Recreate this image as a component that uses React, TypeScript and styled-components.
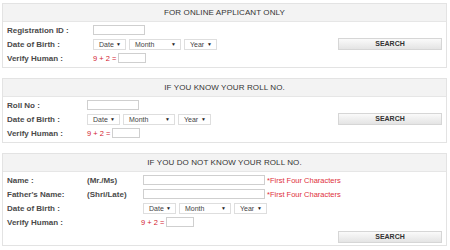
import React from "react";
import styled, { createGlobalStyle } from "styled-components";

const Global = createGlobalStyle`
	body {
		margin: 0;
		background: #ffffff;
		font-family: "Liberation Sans", Arial, sans-serif;
	}
`;

const Page = styled.div`
	display: flex;
	flex-direction: column;
	gap: 10px;
	width: 445px;
	padding: 3px 0 0 2px;
`;

const Panel = styled.section`
	border: 1px solid #e3e3e3;
	background: #ffffff;
`;

const Header = styled.div`
	height: 17px;
	line-height: 17px;
	background: #f3f3f3;
	border-bottom: 1px solid #e6e6e6;
	text-align: center;
	font-size: 8px;
	color: #333;
	letter-spacing: 0.1px;
`;

const Body = styled.div<{ $bottom?: boolean }>`
	display: flex;
	padding: 1px 4px 2px 4px;
	.aside {
		width: 104px;
		flex-shrink: 0;
		display: flex;
		align-items: ${(p) => (p.$bottom ? "flex-end" : "center")};
	}
`;

const Form = styled.div`
	flex: 1;
	min-width: 0;
	display: flex;
	flex-direction: column;
`;

const Row = styled.div`
	display: flex;
	align-items: center;
	height: 14px;
	white-space: nowrap;
`;

const Label = styled.span<{ $w: number }>`
	width: ${(p) => p.$w}px;
	flex-shrink: 0;
	font-size: 8px;
	font-weight: bold;
	color: #4a4a4a;
`;

const TextBox = styled.input<{ $w: number }>`
	width: ${(p) => p.$w}px;
	height: 10px;
	flex-shrink: 0;
	box-sizing: border-box;
	margin: 0;
	padding: 0;
	border: 1px solid #cfcfcf;
	background: #fff;
`;

const Selects = styled.div`
	display: flex;
	gap: 3px;
`;

const Select = styled.div<{ $w: number }>`
	width: ${(p) => p.$w}px;
	height: 11px;
	box-sizing: border-box;
	display: flex;
	align-items: center;
	justify-content: space-between;
	padding: 0 4px 0 5px;
	border: 1px solid #dedede;
	font-size: 7px;
	color: #444;
	span {
		font-size: 5px;
		color: #222;
	}
`;

const Captcha = styled.div`
	display: flex;
	align-items: center;
	gap: 2px;
	font-size: 7.5px;
	color: #d2202f;
`;

const Hint = styled.span`
	margin-left: 2px;
	flex-shrink: 0;
	font-size: 7.5px;
	color: #e0303c;
`;

const SearchButton = styled.button`
	width: 104px;
	height: 12px;
	margin: 0;
	padding: 0;
	border: 1px solid #d6d6d6;
	background: linear-gradient(#fafafa, #e4e4e4);
	font-family: "Liberation Sans", Arial, sans-serif;
	font-size: 7px;
	font-weight: bold;
	color: #333;
	line-height: 10px;
`;

const DateSelects = () => (
	<Selects>
		<Select $w={33}>
			Date <span>▼</span>
		</Select>
		<Select $w={52}>
			Month <span>▼</span>
		</Select>
		<Select $w={33}>
			Year <span>▼</span>
		</Select>
	</Selects>
);

const Verify = () => (
	<Captcha>
		9 + 2 =<TextBox $w={28} />
	</Captcha>
);

const App = () => {
	return (
		<>
			<Global />
			<Page>
				<Panel>
					<Header>FOR ONLINE APPLICANT ONLY</Header>
					<Body>
						<Form>
							<Row>
								<Label $w={86}>Registration ID :</Label>
								<TextBox $w={52} />
							</Row>
							<Row>
								<Label $w={86}>Date of Birth :</Label>
								<DateSelects />
							</Row>
							<Row>
								<Label $w={86}>Verify Human :</Label>
								<Verify />
							</Row>
						</Form>
						<div className='aside'>
							<SearchButton>SEARCH</SearchButton>
						</div>
					</Body>
				</Panel>

				<Panel>
					<Header>IF YOU KNOW YOUR ROLL NO.</Header>
					<Body>
						<Form>
							<Row>
								<Label $w={80}>Roll No :</Label>
								<TextBox $w={52} />
							</Row>
							<Row>
								<Label $w={80}>Date of Birth :</Label>
								<DateSelects />
							</Row>
							<Row>
								<Label $w={80}>Verify Human :</Label>
								<Verify />
							</Row>
						</Form>
						<div className='aside'>
							<SearchButton>SEARCH</SearchButton>
						</div>
					</Body>
				</Panel>

				<Panel>
					<Header>IF YOU DO NOT KNOW YOUR ROLL NO.</Header>
					<Body $bottom>
						<Form>
							<Row>
								<Label $w={80}>Name :</Label>
								<Label $w={56}>(Mr./Ms)</Label>
								<TextBox $w={122} />
								<Hint>*First Four Characters</Hint>
							</Row>
							<Row>
								<Label $w={80}>Father's Name:</Label>
								<Label $w={56}>(Shri/Late)</Label>
								<TextBox $w={122} />
								<Hint>*First Four Characters</Hint>
							</Row>
							<Row>
								<Label $w={136}>Date of Birth :</Label>
								<DateSelects />
							</Row>
							<Row>
								<Label $w={134}>Verify Human :</Label>
								<Verify />
							</Row>
							<Row />
						</Form>
						<div className='aside'>
							<SearchButton>SEARCH</SearchButton>
						</div>
					</Body>
				</Panel>
			</Page>
		</>
	);
};

export default App;
